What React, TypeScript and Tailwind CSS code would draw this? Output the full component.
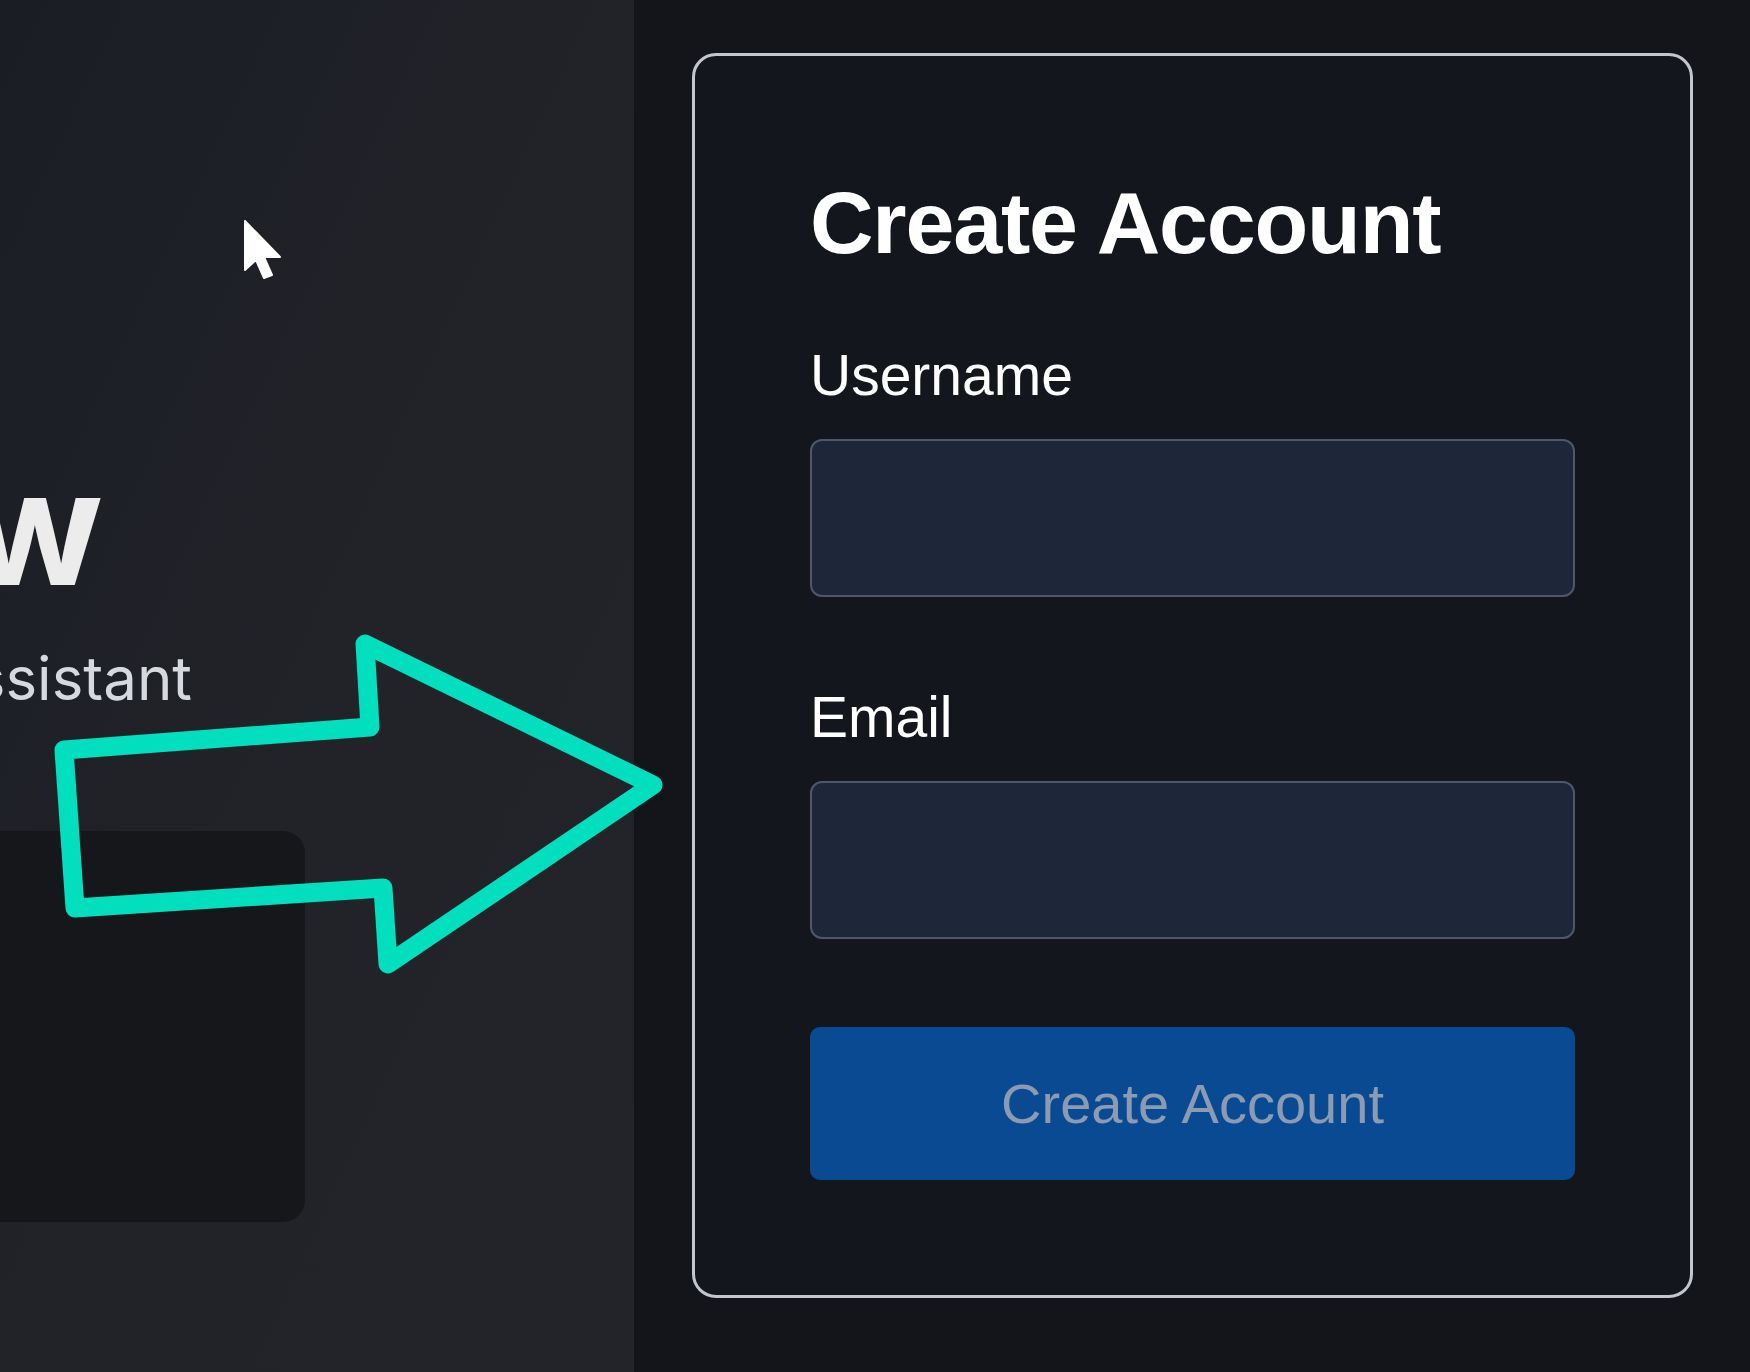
const Field = ({ label, className }: { label: string; className: string }) => (
  <div className={className}>
    <label className="block text-[57px] leading-none text-white">{label}</label>
    <div className="mt-[35px] h-[158px] w-full rounded-[12px] border-2 border-[#4f5868] bg-[#1e263a]" />
  </div>
);

const Arrow = () => (
  <svg className="pointer-events-none absolute left-0 top-0" width="1750" height="1372" viewBox="0 0 1750 1372">
    <polygon
      points="64,750 370,727 365,644 653,785 388,964 383,888 75,908"
      fill="none"
      stroke="#02dfbe"
      strokeWidth="19"
      strokeLinejoin="round"
    />
  </svg>
);

const Cursor = () => (
  <svg className="pointer-events-none absolute left-[243px] top-[219px]" width="42" height="64" viewBox="0 0 42 64">
    <path
      d="M2 2 L2 51 L13 41 L21 59 L29 56 L21 38 L37 38 Z"
      fill="#ffffff"
      stroke="#ffffff"
      strokeWidth="2"
      strokeLinejoin="round"
    />
  </svg>
);

export default function App() {
  return (
    <div className="relative flex h-[1372px] w-[1750px] overflow-hidden bg-[#13151b] font-['Liberation_Sans',Arial,sans-serif]">
      {/* Left hero panel, cropped */}
      <div className="h-full w-[634px] shrink-0 overflow-hidden bg-gradient-to-br from-[#1b1d24] via-[#212329] to-[#22242a] pt-[447px] font-['Inter',sans-serif]">
        <div className="flex w-[103px] justify-end whitespace-nowrap text-[160px] font-bold leading-none text-[#ececed]">
          Chat Now
        </div>
        <div className="mt-[41px] flex w-[192px] justify-end whitespace-nowrap text-[60px] leading-none text-[#d6d9de]">
          Your AI Assistant
        </div>
        <div className="mt-[123px] h-[391px] w-[305px] rounded-r-[22px] bg-[#15171b]" />
      </div>

      {/* Right: sign-up card */}
      <div className="flex-1 pl-[58px] pt-[53px]">
        <div className="h-[1245px] w-[1001px] rounded-[24px] border-[3px] border-[#c3c6cc] bg-[#14161d] px-[115px] pt-[123px]">
          <h1 className="text-[88px] font-bold leading-none tracking-[-1.2px] text-white">Create Account</h1>
          <Field label="Username" className="mt-[80px]" />
          <Field label="Email" className="mt-[92px]" />
          <button className="mt-[88px] flex h-[153px] w-full items-center justify-center rounded-[10px] bg-[#0a4a93] text-[56px] leading-none text-[#8b9bb3]">
            Create Account
          </button>
        </div>
      </div>

      <Arrow />
      <Cursor />
    </div>
  );
}
